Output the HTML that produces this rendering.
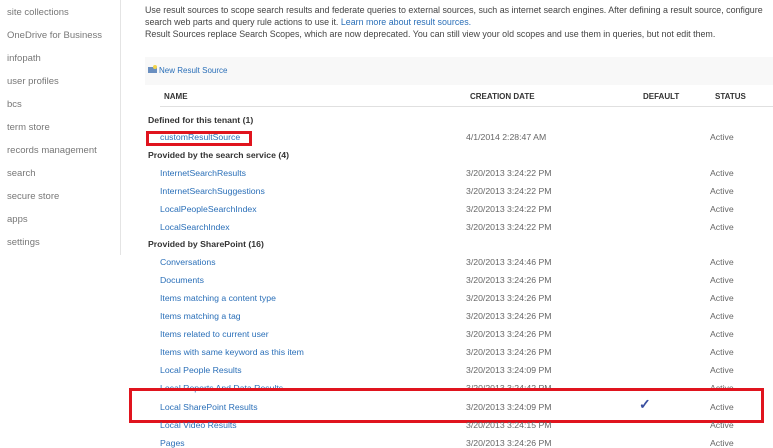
<!DOCTYPE html>
<html><head><style>
body{margin:0;width:773px;height:447px;overflow:hidden;background:#fff;font-family:"Liberation Sans",sans-serif;position:relative;color:#444}
.a{position:absolute;white-space:nowrap;font-size:8.7px}
.nav{position:absolute;left:7px;font-size:9.5px;color:#777}
.l{color:#2a6fb8}
.b{font-weight:bold;color:#333}
.g{color:#666}
</style></head><body>
<div class="nav" style="top:7px">site collections</div>
<div class="nav" style="top:30px">OneDrive for Business</div>
<div class="nav" style="top:53px">infopath</div>
<div class="nav" style="top:76px">user profiles</div>
<div class="nav" style="top:99px">bcs</div>
<div class="nav" style="top:122px">term store</div>
<div class="nav" style="top:145px">records management</div>
<div class="nav" style="top:168px">search</div>
<div class="nav" style="top:191px">secure store</div>
<div class="nav" style="top:214px">apps</div>
<div class="nav" style="top:237px">settings</div>
<div style="position:absolute;left:120px;top:0;width:1px;height:255px;background:#e4e4e4"></div>

<div class="a" style="left:145px;top:5px;font-size:8.9px">Use result sources to scope search results and federate queries to external sources, such as internet search engines. After defining a result source, configure</div>
<div class="a" style="left:145px;top:17px;font-size:8.9px">search web parts and query rule actions to use it. <span class="l">Learn more about result sources.</span></div>
<div class="a" style="left:145px;top:29px;font-size:8.9px">Result Sources replace Search Scopes, which are now deprecated. You can still view your old scopes and use them in queries, but not edit them.</div>

<div style="position:absolute;left:145px;top:57px;width:628px;height:28px;background:#f8f8f8"></div>
<div style="position:absolute;left:148px;top:67px;width:9px;height:6px;background:#6a8fc0"></div>
<div style="position:absolute;left:153px;top:65px;width:4px;height:4px;background:#f2d44c;border-radius:2px"></div>
<div class="a l" style="left:159px;top:66px;font-size:8px">New Result Source</div>

<div class="a b" style="left:164px;top:92px;font-size:8px">NAME</div>
<div class="a b" style="left:470px;top:92px;font-size:8px">CREATION DATE</div>
<div class="a b" style="left:643px;top:92px;font-size:8px">DEFAULT</div>
<div class="a b" style="left:715px;top:92px;font-size:8px">STATUS</div>
<div style="position:absolute;left:160px;top:106px;width:613px;height:1px;background:#e0e0e0"></div>

<div class="a b" style="left:148px;top:115px">Defined for this tenant (1)</div>
<div class="a l" style="left:160px;top:132px">customResultSource</div><div class="a g" style="left:466px;top:132px">4/1/2014 2:28:47 AM</div><div class="a g" style="left:710px;top:132px">Active</div>
<div style="position:absolute;left:146px;top:131px;width:100px;height:9px;border:3px solid #e0141e"></div>

<div class="a b" style="left:148px;top:150px">Provided by the search service (4)</div>
<div class="a l" style="left:160px;top:168px">InternetSearchResults</div><div class="a g" style="left:466px;top:168px">3/20/2013 3:24:22 PM</div><div class="a g" style="left:710px;top:168px">Active</div>
<div class="a l" style="left:160px;top:186px">InternetSearchSuggestions</div><div class="a g" style="left:466px;top:186px">3/20/2013 3:24:22 PM</div><div class="a g" style="left:710px;top:186px">Active</div>
<div class="a l" style="left:160px;top:204px">LocalPeopleSearchIndex</div><div class="a g" style="left:466px;top:204px">3/20/2013 3:24:22 PM</div><div class="a g" style="left:710px;top:204px">Active</div>
<div class="a l" style="left:160px;top:222px">LocalSearchIndex</div><div class="a g" style="left:466px;top:222px">3/20/2013 3:24:22 PM</div><div class="a g" style="left:710px;top:222px">Active</div>

<div class="a b" style="left:148px;top:239px">Provided by SharePoint (16)</div>
<div class="a l" style="left:160px;top:257px">Conversations</div><div class="a g" style="left:466px;top:257px">3/20/2013 3:24:46 PM</div><div class="a g" style="left:710px;top:257px">Active</div>
<div class="a l" style="left:160px;top:275px">Documents</div><div class="a g" style="left:466px;top:275px">3/20/2013 3:24:26 PM</div><div class="a g" style="left:710px;top:275px">Active</div>
<div class="a l" style="left:160px;top:293px">Items matching a content type</div><div class="a g" style="left:466px;top:293px">3/20/2013 3:24:26 PM</div><div class="a g" style="left:710px;top:293px">Active</div>
<div class="a l" style="left:160px;top:311px">Items matching a tag</div><div class="a g" style="left:466px;top:311px">3/20/2013 3:24:26 PM</div><div class="a g" style="left:710px;top:311px">Active</div>
<div class="a l" style="left:160px;top:329px">Items related to current user</div><div class="a g" style="left:466px;top:329px">3/20/2013 3:24:26 PM</div><div class="a g" style="left:710px;top:329px">Active</div>
<div class="a l" style="left:160px;top:347px">Items with same keyword as this item</div><div class="a g" style="left:466px;top:347px">3/20/2013 3:24:26 PM</div><div class="a g" style="left:710px;top:347px">Active</div>
<div class="a l" style="left:160px;top:365px">Local People Results</div><div class="a g" style="left:466px;top:365px">3/20/2013 3:24:09 PM</div><div class="a g" style="left:710px;top:365px">Active</div>
<div class="a l" style="left:160px;top:383px">Local Reports And Data Results</div><div class="a g" style="left:466px;top:383px">3/20/2013 3:24:42 PM</div><div class="a g" style="left:710px;top:383px">Active</div>
<div style="position:absolute;left:129px;top:388px;width:629px;height:29px;border:3px solid #e0141e"></div>
<div class="a l" style="left:160px;top:402px">Local SharePoint Results</div><div class="a g" style="left:466px;top:402px">3/20/2013 3:24:09 PM</div><div class="a" style="left:639px;top:396px;font-size:14px;font-weight:bold;color:#3a4fa0">✓</div><div class="a g" style="left:710px;top:402px">Active</div>
<div class="a l" style="left:160px;top:420px">Local Video Results</div><div class="a g" style="left:466px;top:420px">3/20/2013 3:24:15 PM</div><div class="a g" style="left:710px;top:420px">Active</div>
<div class="a l" style="left:160px;top:438px">Pages</div><div class="a g" style="left:466px;top:438px">3/20/2013 3:24:26 PM</div><div class="a g" style="left:710px;top:438px">Active</div>
</body></html>
